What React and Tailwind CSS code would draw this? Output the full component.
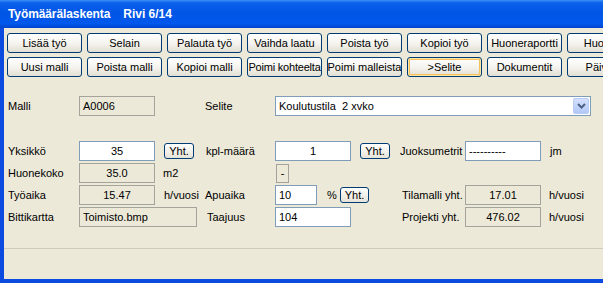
import React from "react";

const font = "font-['Liberation_Sans',Arial,sans-serif]";

const XpButton = ({ children, active, className = "" }) => (
  <div
    className={`h-[20px] shrink-0 rounded-[3px] border border-[#003C74] bg-linear-to-b from-white via-[#F5F4EF] to-[#E2DED2] flex items-center justify-center text-[11px] text-black whitespace-nowrap overflow-hidden ${
      active ? "shadow-[inset_0_0_0_1px_#FCE5A8,inset_0_0_0_2px_#F6C15A]" : ""
    } ${className}`}
  >
    {children}
  </div>
);

const SmallYht = ({ className = "" }) => (
  <div
    className={`h-[16px] shrink-0 rounded-[3px] border border-[#003C74] bg-linear-to-b from-white to-[#E6E3D8] flex items-center justify-center text-[11px] text-black ${className}`}
  >
    Yht.
  </div>
);

// white editable box
const Input = ({ children, className = "", center }) => (
  <div
    className={`h-[20px] shrink-0 border border-[#7F9DB9] bg-white flex items-center px-[3px] text-[11px] text-black whitespace-nowrap ${
      center ? "justify-center" : ""
    } ${className}`}
  >
    {children}
  </div>
);

// readonly grey box
const Shown = ({ children, className = "", center }) => (
  <div
    className={`h-[20px] shrink-0 border border-[#A5A49C] bg-[#ECE9D8] flex items-center px-[3px] text-[11px] text-black whitespace-nowrap ${
      center ? "justify-center" : ""
    } ${className}`}
  >
    {children}
  </div>
);

const Label = ({ children, className = "" }) => (
  <div className={`shrink-0 text-[11px] text-black whitespace-nowrap ${className}`}>{children}</div>
);

export default function App() {
  const topRow = ["Lisää työ", "Selain", "Palauta työ", "Vaihda laatu", "Poista työ", "Kopioi työ", "Huoneraportti", "Huoneet"];
  const bottomRow = ["Uusi malli", "Poista malli", "Kopioi malli", "Poimi kohteelta", "Poimi malleista", ">Selite", "Dokumentit", "Päivitys"];

  return (
    <div className={`w-[603px] h-[283px] overflow-hidden bg-[#ECE9D8] flex flex-col ${font}`}>
      {/* title bar */}
      <div className="h-[28px] shrink-0 flex items-center pl-[8px] bg-[linear-gradient(180deg,#3D8FF8_0%,#0B61EA_10%,#0055E5_45%,#0058EC_85%,#0043CC_100%)]">
        <span className="text-white font-bold text-[12px] tracking-[-0.1px]">Työmäärälaskenta</span>
        <span className="text-white font-bold text-[12px] ml-[13px]">Rivi 6/14</span>
      </div>

      {/* window body */}
      <div className="flex-1 flex flex-col border-l-4 border-b-4 border-[#0C4BDF] overflow-hidden">
        <div className="pt-[5px] pl-[3px] flex flex-col gap-[4px]">
          <div className="flex gap-[5px]">
            {topRow.map((t) => (
              <XpButton key={t} className="w-[75px]">{t}</XpButton>
            ))}
          </div>
          <div className="flex gap-[5px]">
            {bottomRow.map((t) => (
              <XpButton
                key={t}
                active={t === ">Selite"}
                className={`w-[75px] ${t === "Poimi kohteelta" ? "tracking-[-0.2px]" : ""}`}
              >
                {t}
              </XpButton>
            ))}
          </div>
        </div>

        {/* form */}
        <div className="pl-[4px] mt-[19px] flex flex-col">
          <div className="flex items-center h-[20px]">
            <Label className="w-[71px]">Malli</Label>
            <Shown className="w-[76px]">A0006</Shown>
            <Label className="ml-[50px] w-[70px]">Selite</Label>
            <div className="w-[316px] h-[20px] border border-[#7F9DB9] bg-white flex items-center justify-between pl-[3px] pr-[1px]">
              <span className="text-[11px] whitespace-pre">Koulutustila  2 xvko</span>
              <div className="w-[16px] h-[16px] rounded-[2px] border border-[#B8CBF6] bg-linear-to-b from-[#D4E0FD] to-[#B3C8F6] flex items-center justify-center">
                <svg width="9" height="6" viewBox="0 0 9 6">
                  <polyline points="1,1 4.5,4.5 8,1" fill="none" stroke="#4D6185" strokeWidth="2" />
                </svg>
              </div>
            </div>
          </div>

          <div className="flex items-center h-[20px] mt-[25px]">
            <Label className="w-[71px]">Yksikkö</Label>
            <Input className="w-[76px]" center>35</Input>
            <SmallYht className="ml-[9px] w-[30px]" />
            <Label className="ml-[12px] w-[69px]">kpl-määrä</Label>
            <Input className="w-[76px]" center>1</Input>
            <SmallYht className="ml-[9px] w-[30px]" />
            <Label className="ml-[10px] w-[65px]">Juoksumetrit</Label>
            <Input className="w-[76px]">----------</Input>
            <Label className="ml-[9px]">jm</Label>
          </div>

          <div className="flex items-center h-[20px] mt-[2px]">
            <Label className="w-[71px]">Huonekoko</Label>
            <Shown className="w-[76px]" center>35.0</Shown>
            <Label className="ml-[8px] w-[113px]">m2</Label>
            <div className="w-[13px] h-[19px] border border-[#A5A49C] flex items-center justify-center text-[11px]">-</div>
          </div>

          <div className="flex items-center h-[20px] mt-[2px]">
            <Label className="w-[71px]">Työaika</Label>
            <Shown className="w-[76px]" center>15.47</Shown>
            <Label className="ml-[9px] w-[41px]">h/vuosi</Label>
            <Label className="w-[70px]">Apuaika</Label>
            <Input className="w-[42px]">10</Input>
            <Label className="ml-[10px] w-[13px]">%</Label>
            <SmallYht className="w-[29px]" />
            <Label className="ml-[33px] w-[63px]">Tilamalli yht.</Label>
            <Shown className="w-[76px]" center>17.01</Shown>
            <Label className="ml-[8px]">h/vuosi</Label>
          </div>

          <div className="flex items-center h-[20px] mt-[2px]">
            <Label className="w-[71px]">Bittikartta</Label>
            <Shown className="w-[118px]">Toimisto.bmp</Shown>
            <Label className="ml-[10px] w-[68px]">Taajuus</Label>
            <Input className="w-[76px]">104</Input>
            <Label className="ml-[51px] w-[63px]">Projekti yht.</Label>
            <Shown className="w-[76px]" center>476.02</Shown>
            <Label className="ml-[8px]">h/vuosi</Label>
          </div>
        </div>

        <div className="mt-[21px] border-t border-[#CFCCBD]" />
      </div>
    </div>
  );
}
